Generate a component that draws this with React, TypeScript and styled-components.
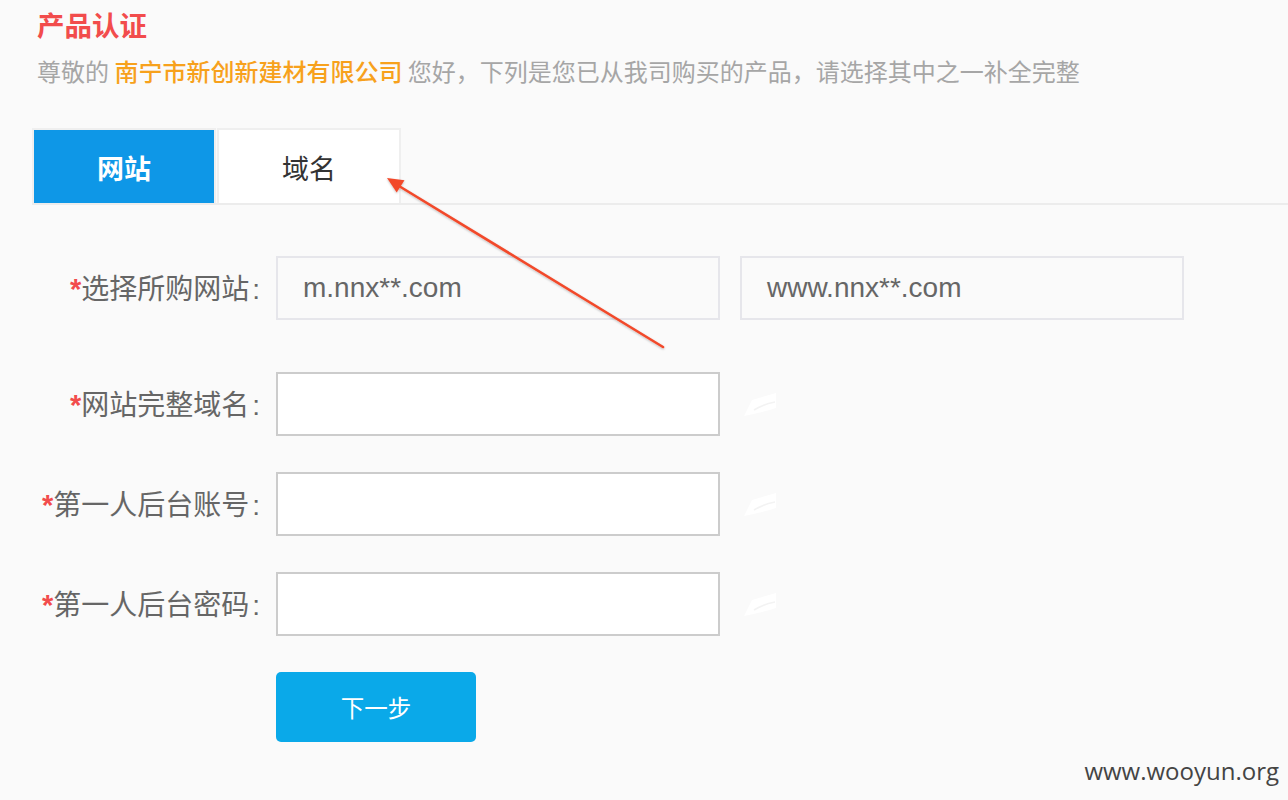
import React from "react";
import styled, { createGlobalStyle } from "styled-components";

const Global = createGlobalStyle`
  html, body { margin: 0; padding: 0; background: #fafafa; }
  body { font-family: "Liberation Sans", "Noto Sans CJK SC", sans-serif; }
  * { box-sizing: border-box; }
`;

const Page = styled.div`
  position: relative;
  width: 1288px;
  height: 800px;
  overflow: hidden;
  background: #fafafa;
  padding-top: 4px;
`;

const Header = styled.div`
  padding-left: 37px;
`;

const Title = styled.h1`
  margin: 0;
  font-family: "Noto Sans CJK SC", sans-serif;
  font-size: 27.5px;
  font-weight: 700;
  line-height: 40px;
  color: #f24c4c;
`;

const Intro = styled.p`
  margin: 10px 0 0;
  font-family: "Noto Sans CJK SC", sans-serif;
  font-size: 24px;
  line-height: 34px;
  color: #a6a6a6;
  white-space: nowrap;
`;

const Company = styled.span`
  color: #f7a11c;
  font-weight: 500;
`;

const TabBar = styled.div`
  display: flex;
  margin: 40px 0 0 32px;
  border-bottom: 2px solid #ececec;
`;

const Tab = styled.div<{ $active?: boolean }>`
  width: 184px;
  height: 75px;
  margin-right: 1px;
  border: 2px solid #efefef;
  border-bottom: none;
  background: ${(p) => (p.$active ? "#0e97e7" : "#ffffff")};
  background-clip: padding-box;
  color: ${(p) => (p.$active ? "#ffffff" : "#333333")};
  font-family: "Noto Sans CJK SC", sans-serif;
  font-size: 27px;
  font-weight: ${(p) => (p.$active ? 700 : 400)};
  display: flex;
  align-items: center;
  justify-content: center;
  padding-top: 2px;
`;

const Form = styled.div`
  display: flex;
  flex-direction: column;
  gap: 36px;
  margin-top: 51px;
`;

const Row = styled.div<{ $extra?: number }>`
  display: grid;
  grid-template-columns: 260px auto;
  column-gap: 16px;
  align-items: center;
  margin-bottom: ${(p) => p.$extra ?? 0}px;
`;

const Label = styled.label`
  text-align: right;
  font-family: "Noto Sans CJK SC", sans-serif;
  font-size: 28px;
  line-height: 40px;
  color: #666;
  white-space: nowrap;
`;

const Star = styled.span`
  color: #f24c4c;
  font-family: "Liberation Sans", sans-serif;
  font-weight: 700;
  font-size: 29px;
`;

const Colon = styled.span`
  font-family: "Liberation Sans", sans-serif;
  margin-left: 3px;
`;

const Fields = styled.div`
  display: flex;
  align-items: center;
  gap: 20px;
`;

const Choice = styled.div`
  width: 444px;
  height: 64px;
  border: 2px solid #e6e6eb;
  background: #fafafa;
  display: flex;
  align-items: center;
  padding-left: 25px;
  font-family: "Liberation Sans", sans-serif;
  font-size: 28px;
  color: #666;
`;

const TextInput = styled.input`
  width: 444px;
  height: 64px;
  border: 2px solid #cccccc;
  background: #ffffff;
  padding: 0 16px;
  font-size: 24px;
  outline: none;
`;

const FieldWrap = styled.div`
  display: flex;
  align-items: center;
  gap: 22px;
`;

const Button = styled.button`
  width: 200px;
  height: 70px;
  border: none;
  border-radius: 5px;
  background: #0aa9e9;
  color: #fff;
  font-family: "Noto Sans CJK SC", sans-serif;
  font-size: 23.5px;
  cursor: pointer;
  padding: 0;
`;

const Watermark = styled.div`
  position: absolute;
  right: 9px;
  bottom: 13px;
  font-family: "Open Sans", sans-serif;
  font-size: 24px;
  color: #444;
`;

const Overlay = styled.svg`
  position: absolute;
  left: 0;
  top: 0;
  pointer-events: none;
`;

const Pen = () => (
  <svg width="36" height="28" viewBox="0 0 36 28">
    <path d="M2 26 L10 10 L34 3 L34 18 Q22 22 2 26 Z" fill="#ffffff" />
    <path d="M12 20 Q22 14 33 12" stroke="#f3f3f3" strokeWidth="1.5" fill="none" />
  </svg>
);

const inputs = ["网站完整域名", "第一人后台账号", "第一人后台密码"];

export default function App() {
  return (
    <Page>
      <Global />
      <Header>
        <Title>产品认证</Title>
        <Intro>
          尊敬的 <Company>南宁市新创新建材有限公司</Company> 您好，下列是您已从我司购买的产品，请选择其中之一补全完整
        </Intro>
      </Header>
      <TabBar>
        <Tab $active>网站</Tab>
        <Tab>域名</Tab>
      </TabBar>
      <Form>
        <Row $extra={16}>
          <Label>
            <Star>*</Star>选择所购网站<Colon>:</Colon>
          </Label>
          <Fields>
            <Choice>m.nnx**.com</Choice>
            <Choice>www.nnx**.com</Choice>
          </Fields>
        </Row>
        {inputs.map((t) => (
          <Row key={t}>
            <Label>
              <Star>*</Star>
              {t}
              <Colon>:</Colon>
            </Label>
            <FieldWrap>
              <TextInput type="text" />
              <Pen />
            </FieldWrap>
          </Row>
        ))}
        <Row>
          <span />
          <div>
            <Button>下一步</Button>
          </div>
        </Row>
      </Form>
      <Watermark>www.wooyun.org</Watermark>
      <Overlay width="1288" height="800" viewBox="0 0 1288 800">
        <defs>
          <filter id="sh" x="-10%" y="-10%" width="120%" height="120%">
            <feDropShadow dx="0" dy="1" stdDeviation="0.8" floodColor="#000" floodOpacity="0.25" />
          </filter>
        </defs>
        <g filter="url(#sh)">
          <line x1="663" y1="347" x2="399" y2="186" stroke="#f24a2c" strokeWidth="2.6" strokeLinecap="round" />
          <polygon points="387,178 404.5,180.2 396.7,192.6" fill="#f24a2c" />
        </g>
      </Overlay>
    </Page>
  );
}
